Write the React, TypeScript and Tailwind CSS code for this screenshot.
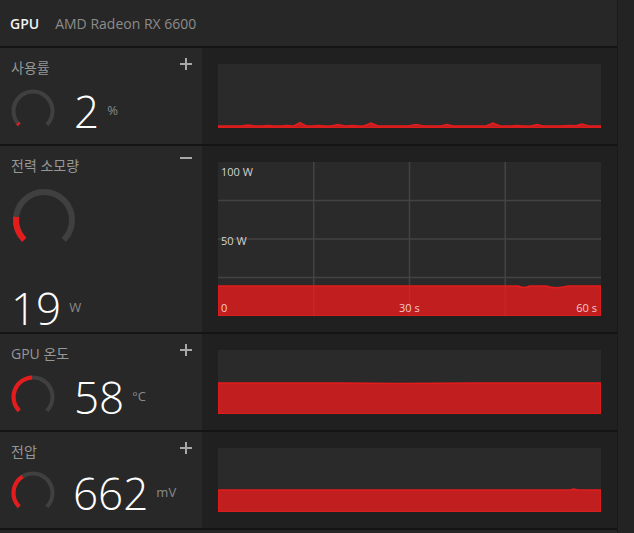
import React from "react";

const RED = "#e41c1c";
const FILL = "#c11f1f";

function polar(cx: number, cy: number, r: number, deg: number) {
  const a = (deg * Math.PI) / 180;
  return [cx + r * Math.cos(a), cy + r * Math.sin(a)];
}

function arcPath(cx: number, cy: number, r: number, a0: number, a1: number) {
  const [x0, y0] = polar(cx, cy, r, a0);
  const [x1, y1] = polar(cx, cy, r, a1);
  const large = a1 - a0 > 180 ? 1 : 0;
  return `M${x0} ${y0} A${r} ${r} 0 ${large} 1 ${x1} ${y1}`;
}

function Gauge({ size, r, stroke, frac }: { size: number; r: number; stroke: number; frac: number }) {
  const c = size / 2;
  const end = 135 + 270 * frac;
  return (
    <svg width={size} height={size} className="shrink-0">
      <path d={arcPath(c, c, r, 135, 405)} fill="none" stroke="#404040" strokeWidth={stroke} />
      <path d={arcPath(c, c, r, 135, end)} fill="none" stroke={RED} strokeWidth={stroke} />
    </svg>
  );
}

function PlusIcon() {
  return (
    <svg width="12" height="12" viewBox="0 0 12 12" className="shrink-0">
      <path d="M6 0V12M0 6H12" stroke="#a8a8a8" strokeWidth="2" />
    </svg>
  );
}

function MinusIcon() {
  return (
    <svg width="12" height="12" viewBox="0 0 12 12" className="shrink-0">
      <path d="M0 2H12" stroke="#a8a8a8" strokeWidth="2" />
    </svg>
  );
}

// small spikes along the bottom of the usage chart
const spikes: [number, number, number][] = [
  [30, 3, 7], [50, 2.5, 6], [69, 2.5, 6], [82, 5.5, 6], [100, 2.5, 6], [120, 3.5, 7],
  [134, 2.5, 6], [153, 5, 7], [198, 3.5, 7], [217, 2, 5], [229, 3.5, 6], [260, 2, 5],
  [275, 5, 7], [299, 2.5, 6], [319, 3.5, 6], [352, 2.5, 10], [364, 4, 7], [381, 2, 2],
];

function usagePath() {
  const base = 62;
  let d = `M0 64 L0 ${base}`;
  for (const [x, h, w] of spikes) {
    d += ` L${x - w} ${base} L${x} ${64 - h} L${x + w} ${base}`;
  }
  d += ` L383 ${base} L383 64 Z`;
  return d;
}

function AreaChart({ d, height }: { d: string; height: number }) {
  return (
    <svg width="383" height={height} className="block">
      <path d={d} fill={FILL} stroke={RED} strokeWidth="1.5" />
    </svg>
  );
}

function PowerChart() {
  const xs = [95.75, 191.5, 287.25];
  const ys = [38.5, 77, 115.5];
  return (
    <div className="relative h-[154px] w-[383px] bg-[#2a2a2a]">
      <svg width="383" height="154" className="absolute left-0 top-0">
        {xs.map((x) => (
          <line key={x} x1={x} y1="0" x2={x} y2="154" stroke="#434343" strokeWidth="1.5" />
        ))}
        {ys.map((y) => (
          <line key={y} x1="0" y1={y} x2="383" y2={y} stroke="#434343" strokeWidth="1.5" />
        ))}
        <path
          d="M0 154 L0 124 L300 124 Q306 127 312 124 L328 124 Q338 127.5 350 124 L383 124 L383 154 Z"
          fill={FILL}
          stroke={RED}
          strokeWidth="1.5"
        />
        {xs.map((x) => (
          <line key={"o" + x} x1={x} y1="125" x2={x} y2="154" stroke="#ffffff" strokeOpacity="0.04" strokeWidth="1.5" />
        ))}
      </svg>
      <span className="absolute left-[3px] top-[3px] text-[11px] leading-[14px] text-[#d4d4d4]">100 W</span>
      <span className="absolute left-[3px] top-[72px] text-[11px] leading-[14px] text-[#d4d4d4]">50 W</span>
      <span className="absolute bottom-[1px] left-[3px] text-[11px] leading-[14px] text-[#f2caca]">0</span>
      <span className="absolute bottom-[1px] left-[181px] text-[11px] leading-[14px] text-[#f2caca]">30 s</span>
      <span className="absolute bottom-[1px] right-[4px] text-[11px] leading-[14px] text-[#f2caca]">60 s</span>
    </div>
  );
}

function Value({ num, unit }: { num: string; unit: string }) {
  return (
    <div className="flex items-center gap-[8px]">
      <span className="text-[44px] font-light leading-[44px] text-white">{num}</span>
      <span className="mb-[3px] text-[13px] leading-[16px] text-[#8a8a8a]">{unit}</span>
    </div>
  );
}

function Row({
  label,
  icon,
  children,
  chart,
  tall,
}: {
  label: string;
  icon: React.ReactNode;
  children: React.ReactNode;
  chart: React.ReactNode;
  tall?: boolean;
}) {
  return (
    <section className={`flex border-b-2 border-[#141414] ${tall ? "h-[188px]" : "h-[98px]"}`}>
      <div className="flex w-[202px] flex-col bg-[#282828] px-[10px] pt-[10px]">
        <div className="flex items-start justify-between">
          <span className="pl-[1px] text-[14px] leading-[20px] text-[#969696]">{label}</span>
          {icon}
        </div>
        {children}
      </div>
      <div className="flex-1 bg-[#202020] p-[16px]">{chart}</div>
    </section>
  );
}

export default function App() {
  return (
    <div className="flex h-[533px] w-[634px] overflow-hidden bg-[#262626] font-['Open_Sans','Noto_Sans_CJK_KR',sans-serif]">
      <div className="flex w-[617px] flex-col">
        <header className="flex h-[48px] items-center gap-[16px] border-b-2 border-[#141414] bg-[#272727] px-[10px] text-[14px]">
          <span className="font-semibold text-[#f2f2f2]">GPU</span>
          <span className="text-[#8c8c8c]">AMD Radeon RX 6600</span>
        </header>

        <Row label="사용률" icon={<PlusIcon />} chart={<div className="h-[64px] w-[383px] bg-[#2a2a2a]"><AreaChart d={usagePath()} height={64} /></div>}>
          <div className="mt-[10px] flex items-center gap-[18px]">
            <Gauge size={46} r={19.5} stroke={4} frac={0.025} />
            <Value num="2" unit="%" />
          </div>
        </Row>

        <Row label="전력 소모량" icon={<MinusIcon />} chart={<PowerChart />} tall>
          <div className="mt-[11px] pl-[1px]">
            <Gauge size={66} r={28} stroke={6} frac={0.19} />
          </div>
          <div className="mt-auto pb-[2px] pl-[1px]">
            <Value num="19" unit="W" />
          </div>
        </Row>

        <Row
          label="GPU 온도"
          icon={<PlusIcon />}
          chart={
            <div className="h-[64px] w-[383px] bg-[#2a2a2a]">
              <AreaChart d="M0 64 L0 33 L120 33 L180 33.5 L260 33 L383 33 L383 64 Z" height={64} />
            </div>
          }
        >
          <div className="mt-[10px] flex items-center gap-[18px]">
            <Gauge size={46} r={19.5} stroke={4} frac={0.49} />
            <Value num="58" unit="°C" />
          </div>
        </Row>

        <Row
          label="전압"
          icon={<PlusIcon />}
          chart={
            <div className="h-[64px] w-[383px] bg-[#2a2a2a]">
              <AreaChart d="M0 64 L0 42 L352 42 L356 41 L360 42 L383 42 L383 64 Z" height={64} />
            </div>
          }
        >
          <div className="mt-[8px] flex items-center gap-[17px]">
            <Gauge size={46} r={19.5} stroke={4} frac={0.38} />
            <Value num="662" unit="mV" />
          </div>
        </Row>
      </div>
      <div className="w-[17px] border-l border-[#1a1a1a] bg-[#232323]" />
    </div>
  );
}
